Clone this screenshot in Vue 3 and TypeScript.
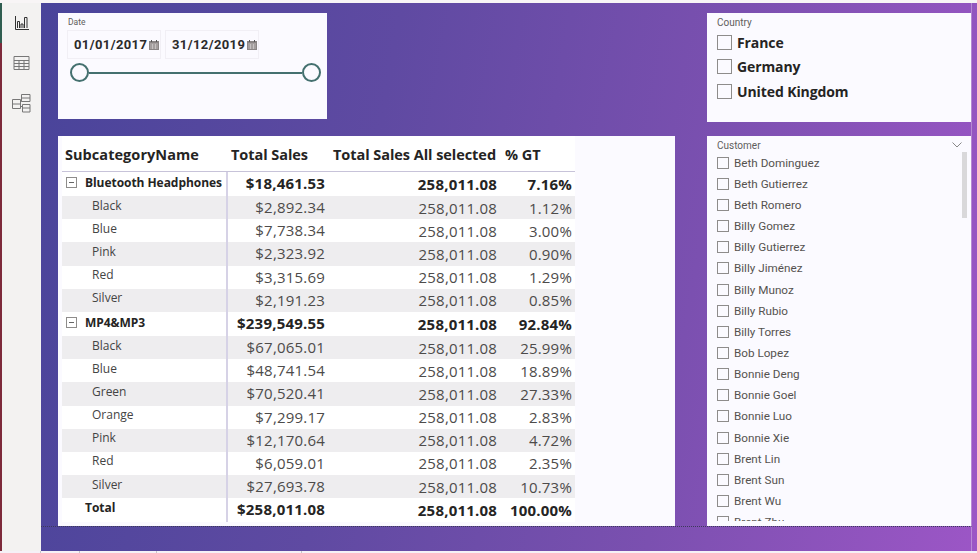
<script setup lang="ts">
type Row = { name: string; sales: string; all: string; pct: string; kind?: 'group' | 'total' }

const ALL = '258,011.08'
const rows: Row[] = [
  { name: 'Bluetooth Headphones', sales: '$18,461.53', all: ALL, pct: '7.16%', kind: 'group' },
  { name: 'Black', sales: '$2,892.34', all: ALL, pct: '1.12%' },
  { name: 'Blue', sales: '$7,738.34', all: ALL, pct: '3.00%' },
  { name: 'Pink', sales: '$2,323.92', all: ALL, pct: '0.90%' },
  { name: 'Red', sales: '$3,315.69', all: ALL, pct: '1.29%' },
  { name: 'Silver', sales: '$2,191.23', all: ALL, pct: '0.85%' },
  { name: 'MP4&MP3', sales: '$239,549.55', all: ALL, pct: '92.84%', kind: 'group' },
  { name: 'Black', sales: '$67,065.01', all: ALL, pct: '25.99%' },
  { name: 'Blue', sales: '$48,741.54', all: ALL, pct: '18.89%' },
  { name: 'Green', sales: '$70,520.41', all: ALL, pct: '27.33%' },
  { name: 'Orange', sales: '$7,299.17', all: ALL, pct: '2.83%' },
  { name: 'Pink', sales: '$12,170.64', all: ALL, pct: '4.72%' },
  { name: 'Red', sales: '$6,059.01', all: ALL, pct: '2.35%' },
  { name: 'Silver', sales: '$27,693.78', all: ALL, pct: '10.73%' },
  { name: 'Total', sales: '$258,011.08', all: ALL, pct: '100.00%', kind: 'total' },
]

const countries = ['France', 'Germany', 'United Kingdom']
const customers = [
  'Beth Dominguez', 'Beth Gutierrez', 'Beth Romero', 'Billy Gomez', 'Billy Gutierrez', 'Billy Jiménez',
  'Billy Munoz', 'Billy Rubio', 'Billy Torres', 'Bob Lopez', 'Bonnie Deng', 'Bonnie Goel',
  'Bonnie Luo', 'Bonnie Xie', 'Brent Lin', 'Brent Sun', 'Brent Wu', 'Brent Zhu',
]
const dates = ['01/01/2017', '31/12/2019']
const tabs = [39, 77, 145]
</script>

<template>
  <div class="app">
    <div class="topline"></div>
    <div class="main">
      <nav class="rail">
        <div class="rail-item active">
          <svg width="14" height="14" viewBox="0 0 14 14" fill="none" stroke="#333" stroke-width="1">
            <path d="M0.500 0v13.500H14" />
            <path d="M2.500 12V5.500h2V12M6 12V8h2v4M9.500 12V1.500h2.500V12" />
          </svg>
        </div>
        <div class="rail-item">
          <svg width="17" height="16" viewBox="0 0 17 16" fill="none" stroke="#777" stroke-width="1">
            <path d="M1 1.500h15v13H1zM1 5.500h15M1 8.500h15M1 11.500h15M6 5.500v9M11 5.500v9" />
          </svg>
        </div>
        <div class="rail-item">
          <svg width="19" height="19" viewBox="0 0 19 19" fill="none" stroke="#777" stroke-width="1">
            <path d="M0.500 5.500h8v9h-8zM0.500 10h8" />
            <path d="M9.500 0.500h8.500v7h-8.500zM9.500 4h8.500M10.500 10.500h7.500v7.500h-7.500zM10.500 14h7.500" />
            <path d="M8.500 7.500h1M8.500 12.500h2" />
          </svg>
        </div>
      </nav>

      <main class="canvas">
        <section class="cell-date">
          <div class="card date-card">
            <div class="slicer-title">Date</div>
            <div class="date-boxes">
              <div v-for="d in dates" :key="d" class="date-box">
                <span>{{ d }}</span>
                <svg class="cal" width="10" height="10" viewBox="0 0 10 10">
                  <rect x="0" y="1" width="10" height="9" fill="#8a8585" />
                  <path d="M2.500 0v2M7.500 0v2" stroke="#555" stroke-width="1" />
                  <path d="M1 4h8M1 6h8M1 8h8M3.500 4v5M6.500 4v5" stroke="#d4d0d0" stroke-width="0.7" />
                </svg>
              </div>
            </div>
            <div class="slider">
              <span class="knob"></span>
              <span class="track"></span>
              <span class="knob"></span>
            </div>
          </div>
        </section>

        <section class="card country-card">
          <div class="slicer-title">Country</div>
          <label v-for="c in countries" :key="c" class="country">
            <span class="box big"></span>{{ c }}
          </label>
        </section>

        <section class="card table-card">
          <div class="tbl">
            <div class="tr head">
              <div class="th">SubcategoryName</div>
              <div class="th">Total Sales</div>
              <div class="th">Total Sales All selected</div>
              <div class="th">% GT</div>
            </div>
            <div
              v-for="(r, i) in rows"
              :key="i"
              class="tr"
              :class="[r.kind ?? 'child', { shaded: !r.kind && i % 2 === 1 }]"
            >
              <div class="name">
                <span v-if="r.kind === 'group'" class="expander"></span>
                <span>{{ r.name }}</span>
              </div>
              <div class="num sales">{{ r.sales }}</div>
              <div class="num">{{ r.all }}</div>
              <div class="num">{{ r.pct }}</div>
            </div>
          </div>
        </section>

        <section class="card customer-card">
          <div class="slicer-title customer-title">
            Customer
            <svg class="chevron" width="10" height="6" viewBox="0 0 10 6" fill="none" stroke="#888" stroke-width="1">
              <path d="M0.500 0.500L5 5L9.500 0.500" />
            </svg>
          </div>
          <div class="scrollbar"></div>
          <div class="customers">
            <div v-for="c in customers" :key="c" class="customer">
              <span class="box"></span>{{ c }}
            </div>
          </div>
        </section>

        <div class="dashed"></div>
        <div class="edge"></div>
      </main>
    </div>
    <div class="bottomline">
      <span class="tab-pad"></span>
      <span v-for="w in tabs" :key="w" class="tab" :style="{ width: w + 'px' }"></span>
    </div>
  </div>
</template>

<style>
html, body {
  margin: 0;
  overflow: hidden;
  background: #fff;
}
</style>

<style scoped>
.app {
  width: 977px;
  height: 553px;
  display: flex;
  flex-direction: column;
  overflow: hidden;
  font-family: "Open Sans", "Liberation Sans", sans-serif;
  color: #252423;
}
.topline {
  height: 3px;
  background: #f8f5f6;
  flex-shrink: 0;
}
.bottomline {
  height: 2px;
  background: #f5f1f7;
  flex-shrink: 0;
  display: flex;
}
.tab-pad {
  width: 41px;
  border-right: 1px solid #c8c6c8;
  box-sizing: border-box;
}
.tab {
  border-right: 1px solid #c8c6c8;
  box-sizing: border-box;
}
.main {
  flex: 1;
  display: flex;
  min-height: 0;
}
.rail {
  width: 39px;
  background: #f3f2f1;
  border-left: 2px solid #7d2a3b;
  display: flex;
  flex-direction: column;
  position: relative;
}
.rail-item {
  height: 40px;
  display: flex;
  align-items: center;
  justify-content: center;
}
.rail-item.active {
  box-shadow: -2px 0 0 #2f5d50;
}
.canvas {
  flex: 1;
  position: relative;
  background: linear-gradient(100deg, #49449a 0%, #5f4aa2 35%, #7b50b0 68%, #9c56c6 100%);
  display: grid;
  grid-template-columns: 617px 264px;
  grid-template-rows: 109px 390px;
  column-gap: 32px;
  row-gap: 14px;
  padding: 10px 0 0 17px;
  box-sizing: border-box;
}
.card {
  background: #fbfaff;
}
.date-card {
  width: 269px;
  height: 106px;
  padding: 3px 9px 0;
  box-sizing: border-box;
}
.slicer-title {
  font-family: Roboto, "Liberation Sans", sans-serif;
  font-size: 10px;
  line-height: 12px;
  color: #5f5d5c;
}
.date-card .slicer-title {
  font-size: 8.500px;
  padding-left: 1px;
}
.date-boxes {
  display: flex;
  gap: 4px;
  margin-top: 2px;
}
.date-box {
  width: 94px;
  height: 29px;
  border: 1px solid #f1eff5;
  box-sizing: border-box;
  display: flex;
  align-items: center;
  gap: 2px;
  padding-left: 6px;
  font-family: Roboto, sans-serif;
  font-weight: 700;
  font-size: 13px;
  letter-spacing: 0.4px;
  color: #2b2a2a;
}
.cal {
  flex-shrink: 0;
}
.slider {
  display: flex;
  align-items: center;
  margin: 4px 0 0 3px;
  width: 251px;
}
.knob {
  width: 19px;
  height: 19px;
  border-radius: 50%;
  border: 2px solid #44706f;
  background: #fbfaff;
  box-sizing: border-box;
  flex-shrink: 0;
}
.track {
  flex: 1;
  height: 2px;
  background: #44706f;
}
.country-card {
  padding: 4px 10px 0;
  height: 109px;
  box-sizing: border-box;
}
.country {
  display: flex;
  align-items: center;
  gap: 5px;
  height: 24.500px;
  font-size: 14px;
  font-weight: 700;
  letter-spacing: -0.1px;
  color: #252423;
}
.country:first-of-type {
  margin-top: 1px;
}
.box {
  width: 12px;
  height: 12px;
  border: 1px solid #8e8c8b;
  box-sizing: border-box;
  flex-shrink: 0;
}
.box.big {
  width: 15px;
  height: 15px;
}
.table-card {
  overflow: hidden;
}
.tbl {
  width: 513px;
  margin-left: 4px;
}
.tr {
  display: grid;
  grid-template-columns: 164px 102px 172px 75px;
  height: 23.200px;
  align-items: center;
  background: #fff;
}
.tr.group, .tr.total {
  height: 24px;
}
.tr.head {
  height: 35px;
  border-bottom: 1px solid #c7c3d9;
  box-sizing: content-box;
}
.tr.shaded {
  background: #eeedef;
}
.th {
  font-size: 14.500px;
  font-weight: 700;
  letter-spacing: 0.05px;
  padding-left: 3px;
  padding-top: 2px;
  color: #252423;
  white-space: nowrap;
}
.th:not(:first-child) {
  padding-left: 5px;
  letter-spacing: -0.05px;
}
.name {
  display: flex;
  align-items: center;
  height: 100%;
  box-sizing: border-box;
  padding-bottom: 5px;
  font-size: 12px;
  white-space: nowrap;
  color: #444;
}
.child .name {
  padding-left: 30px;
}
.group .name, .total .name {
  padding-bottom: 3px;
  font-weight: 700;
  color: #252423;
  letter-spacing: -0.05px;
}
.total .name {
  padding-left: 23px;
  padding-bottom: 5px;
}
.expander {
  width: 11px;
  height: 11px;
  border: 1px solid #8e8c8b;
  box-sizing: border-box;
  margin: 0 8px 0 4px;
  position: relative;
  flex-shrink: 0;
}
.expander::after {
  content: "";
  position: absolute;
  left: 2px;
  right: 2px;
  top: 4px;
  height: 1px;
  background: #666;
}
.num {
  text-align: right;
  padding-right: 3px;
  font-size: 15px;
  letter-spacing: 0.2px;
  color: #4d4b4a;
  white-space: nowrap;
}
.sales {
  border-left: 2px solid #d6d2e6;
  height: 100%;
  box-sizing: border-box;
  line-height: 23.200px;
}
.group .num, .total .num {
  font-weight: 700;
  color: #252423;
}
.customer-card {
  position: relative;
  overflow: hidden;
}
.customer-title {
  padding: 4px 10px 0;
}
.chevron {
  position: absolute;
  right: 9px;
  top: 6px;
}
.scrollbar {
  position: absolute;
  right: 4px;
  top: 16px;
  width: 5px;
  height: 66px;
  background: #d9d8da;
}
.customers {
  height: 369px;
  padding: 0 10px;
  overflow: hidden;
  box-sizing: border-box;
}
.customer {
  display: flex;
  align-items: center;
  gap: 5px;
  height: 21.170px;
  font-family: Roboto, sans-serif;
  font-size: 11.700px;
  color: #55524f;
}
.dashed {
  position: absolute;
  left: 0;
  right: 5px;
  top: 523px;
  border-top: 1px dotted #3d3a5c;
}
.edge {
  position: absolute;
  top: 0;
  bottom: 0;
  right: 5px;
  width: 1px;
  background: rgba(255, 255, 255, 0.3);
}
</style>
